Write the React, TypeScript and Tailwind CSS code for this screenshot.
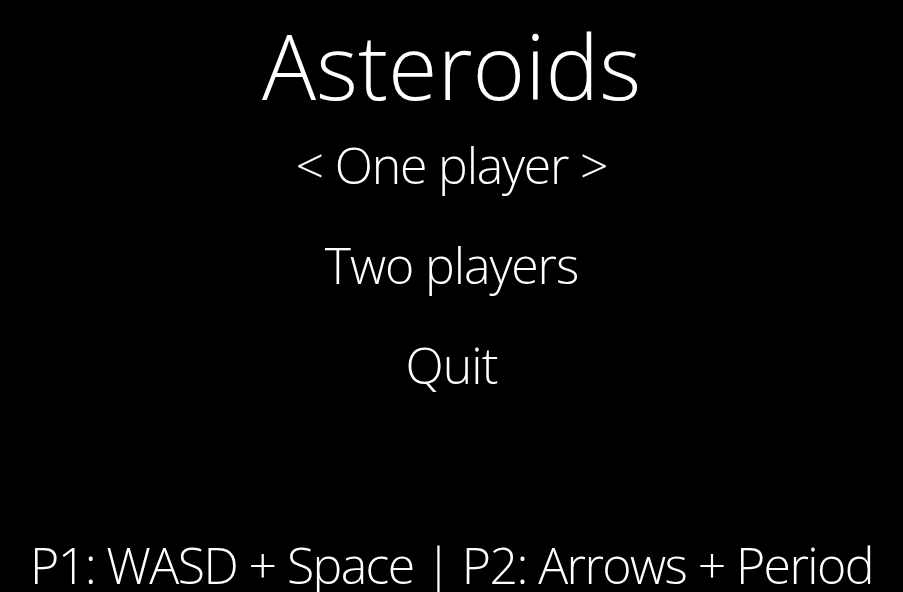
import React from "react";

export default function App() {
  const font = { fontFamily: '"Open Sans", "Noto Sans", sans-serif' };
  return (
    <div
      className="w-full h-[592px] bg-black text-white flex flex-col items-center overflow-hidden font-light"
      style={font}
    >
      <div className="pt-[15px] h-[115px] text-[90px] leading-[100px] whitespace-nowrap">Asteroids</div>
      <div className="h-[100px] text-[50px] leading-[100px] tracking-[-1.2px] whitespace-nowrap">&lt; One player &gt;</div>
      <div className="h-[100px] text-[50px] leading-[100px] tracking-[-1.1px] whitespace-nowrap">Two players</div>
      <div className="h-[100px] text-[50px] leading-[100px] tracking-[-1px] whitespace-nowrap">Quit</div>
      <div className="flex-1" />
      <div className="h-[77px] text-[50px] leading-[100px] tracking-[-1.6px] whitespace-nowrap">P1: WASD + Space | P2: Arrows + Period</div>
    </div>
  );
}
